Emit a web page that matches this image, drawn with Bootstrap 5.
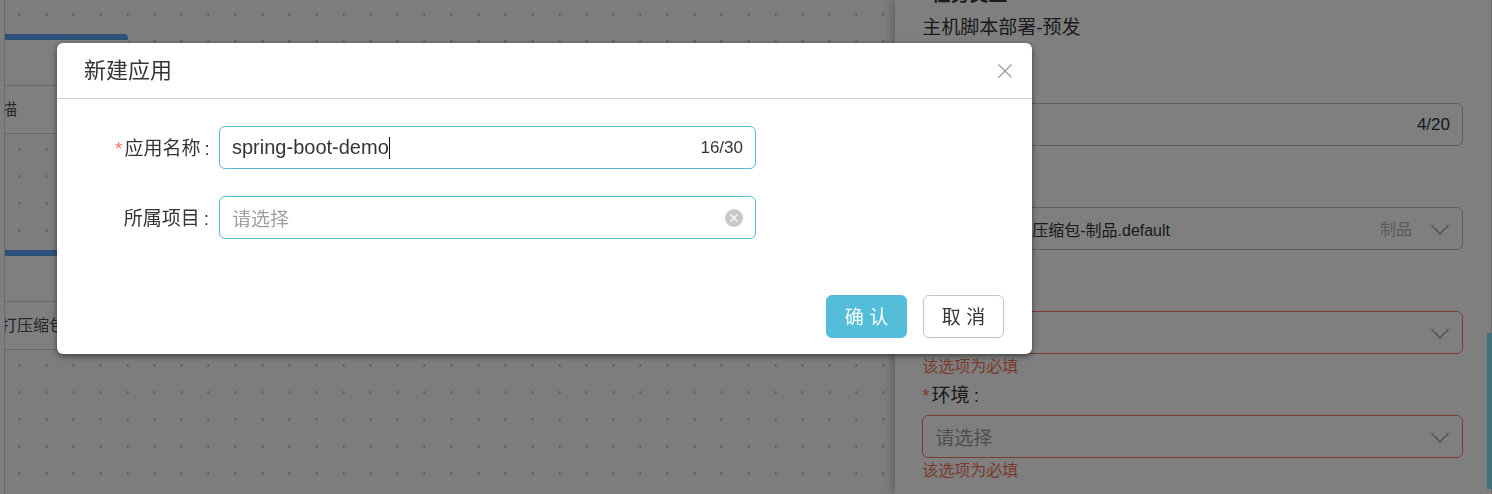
<!DOCTYPE html>
<html lang="zh-CN">
<head>
<meta charset="utf-8">
<meta name="viewport" content="width=device-width, initial-scale=1">
<title>新建应用</title>
<link href="https://cdn.jsdelivr.net/npm/bootstrap@5.3.0/dist/css/bootstrap.min.css" rel="stylesheet">
<style>
  :root {
    --accent: #54bdda;
    --danger: #f5775b;
    --ink: #33353a;
    --muted: #9c9ea1;
  }
  body {
    font-family: "Liberation Sans", "Noto Sans CJK SC", sans-serif;
    font-size: 19px;
    line-height: 28px;
    color: var(--ink);
    background: #fff;
  }
  .workspace { min-height: 100vh; max-height: 100vh; }

  /* Pipeline canvas */
  .canvas {
    margin-left: 4px;
    border-left: 1px solid #d4d6d8;
    background: #f8fafd radial-gradient(circle, #cdcfd2 1px, transparent 2px) 1px 1px / 27px 27px;
  }
  .stages { width: 123px; padding-top: 34px; gap: 116px; }
  .stage { height: 100px; background: #fff; border-top: 6px solid #5aa5f2; border-top-right-radius: 4px; border-bottom: 1px solid #d2d4d6; }
  .stage-name { height: 46px; border-bottom: 1px solid #d6d7d9; }
  .stage-job { height: 47px; margin-left: -4px; padding-top: 1px; font-size: 16px; color: #4a4c50; white-space: nowrap; }

  /* Task drawer */
  .drawer {
    width: 40%;
    padding: 0 28px 0 27px;
    background: #fff;
    border-right: 1px solid #d5d5d5;
    box-shadow: 0 0 12px rgba(0, 0, 0, .35);
  }
  .drawer-kind { margin-top: -15px; line-height: 20px; font-weight: 700; }
  .drawer-value { margin-top: 9px; margin-bottom: 31px; }
  .field { height: 104px; }
  .field-label { height: 20px; line-height: 22px; margin-bottom: 10px; }
  .field-error { font-size: 16px; line-height: 24px; color: var(--danger); }
  .rail { right: 0; top: 333px; bottom: 5px; width: 5px; background: #84dff8; }

  /* Bordered control shared by the drawer and the dialog */
  .control {
    height: 43px;
    margin-bottom: 1px;
    padding: 0 12px;
    border: 1px solid #bcbcbc;
    border-radius: 6px;
    background: #fff;
  }
  .control.is-bad { border-color: var(--danger); }
  .control.is-active { border-color: var(--accent); }
  .control input, .control select {
    min-width: 0;
    height: 30px;
    padding: 0;
    border: 0;
    outline: 0;
    appearance: none;
    background: transparent;
    color: var(--ink);
  }
  .control input { font-size: 20px; }
  .control select { padding-top: 3px; }
  .control select.is-empty { color: var(--muted); }
  .control select.artifact { font-size: 16px; padding-left: 97px; }
  .counter { font-size: 17px; }
  .kind-tag { font-size: 16px; color: #b4b6b8; margin-right: 18px; padding-top: 2px; }
  .star { color: var(--danger); margin-right: 2px; }
  .colon { margin-left: 4px; }

  /* Dialog */
  .app-dialog { max-width: none; margin: 43px 460px 0 57px; }
  .app-dialog .modal-content { border: 0; border-radius: 6px; color: var(--ink); box-shadow: 0 2px 6px rgba(0, 0, 0, .5); }
  .app-dialog .modal-header { height: 56px; padding: 0 20px 0 27px; border-bottom: 1px solid #d2d2d2; border-radius: 0; }
  .app-dialog .modal-title { font-size: 22px; font-weight: 400; line-height: 28px; }
  .app-dialog .modal-body { padding: 27px 27px 0 58px; }
  .app-dialog .modal-footer { padding: 0 28px 16px; margin-top: 55px; gap: 16px; border: 0; }
  .form-line { gap: 10px; }
  .form-line label { width: 94px; padding-top: 2px; white-space: nowrap; }
  .form-line .control { width: 537px; }
  .lines { gap: 26px; }
  .caret { left: 169px; top: 10px; width: 1px; height: 22px; background: #111; }
  .icon-btn { padding: 0; border: 0; background: none; line-height: 1; display: flex; }
  .act { width: 81px; height: 43px; padding: 3px 0 0; font-size: 19px; border-radius: 6px; }
  .act-ok, .act-ok:hover { background: var(--accent); border-color: var(--accent); color: #fff; }
  .act-cancel, .act-cancel:hover { background: #fff; border-color: #c4c4c4; color: var(--ink); }
</style>
</head>
<body>
<div class="workspace d-flex overflow-hidden position-relative">
  <main class="canvas flex-grow-1 overflow-hidden">
    <div class="stages d-flex flex-column">
      <section class="stage">
        <div class="stage-name"></div>
        <div class="stage-job d-flex align-items-center">描</div>
      </section>
      <section class="stage">
        <div class="stage-name"></div>
        <div class="stage-job d-flex align-items-center">打压缩包</div>
      </section>
    </div>
  </main>

  <aside class="drawer flex-shrink-0">
    <div class="drawer-kind"><span class="star">*</span>任务类型</div>
    <div class="drawer-value">主机脚本部署-预发</div>

    <div class="field">
      <div class="field-label"></div>
      <div class="control d-flex align-items-center">
        <input class="flex-grow-1" type="text" aria-label="任务名称">
        <span class="counter">4/20</span>
      </div>
    </div>
    <div class="field">
      <div class="field-label"></div>
      <div class="control d-flex align-items-center">
        <select class="artifact flex-grow-1" aria-label="部署制品"><option>压缩包-制品.default</option></select>
        <span class="kind-tag">制品</span>
        <svg width="20" height="12" viewBox="0 0 20 12" fill="none" stroke="#a6a6a6" stroke-width="1.5" aria-hidden="true"><path d="M1.5 2 10 11 18.500 2"/></svg>
      </div>
    </div>
    <div class="field">
      <div class="field-label"></div>
      <div class="control is-bad d-flex align-items-center">
        <select class="flex-grow-1" aria-label="应用"><option></option></select>
        <svg width="20" height="12" viewBox="0 0 20 12" fill="none" stroke="#a6a6a6" stroke-width="1.5" aria-hidden="true"><path d="M1.5 2 10 11 18.500 2"/></svg>
      </div>
      <div class="field-error">该选项为必填</div>
    </div>
    <div class="field">
      <label class="field-label d-block" for="env"><span class="star">*</span>环境<span class="colon">:</span></label>
      <div class="control is-bad d-flex align-items-center">
        <select id="env" class="is-empty flex-grow-1"><option>请选择</option></select>
        <svg width="20" height="12" viewBox="0 0 20 12" fill="none" stroke="#a6a6a6" stroke-width="1.5" aria-hidden="true"><path d="M1.5 2 10 11 18.500 2"/></svg>
      </div>
      <div class="field-error">该选项为必填</div>
    </div>
  </aside>
  <div class="rail position-absolute"></div>
</div>

<div class="modal-backdrop show"></div>
<div class="modal d-block" role="dialog" aria-modal="true" aria-labelledby="dialogTitle">
  <div class="modal-dialog app-dialog">
    <form class="modal-content">
      <div class="modal-header">
        <h1 class="modal-title" id="dialogTitle">新建应用</h1>
        <button type="button" class="icon-btn" aria-label="关闭">
          <svg width="14" height="14" viewBox="0 0 14 14" stroke="#999" stroke-width="1.2"><path d="M.5.5l13 13M13.500.5l-13 13"/></svg>
        </button>
      </div>
      <div class="modal-body">
        <div class="lines d-flex flex-column">
          <div class="form-line d-flex align-items-center">
            <label class="text-end" for="appName"><span class="star">*</span>应用名称<span class="colon">:</span></label>
            <div class="control is-active d-flex align-items-center position-relative">
              <input id="appName" class="flex-grow-1" type="text" value="spring-boot-demo">
              <span class="counter">16/30</span>
              <span class="caret position-absolute"></span>
            </div>
          </div>
          <div class="form-line d-flex align-items-center">
            <label class="text-end" for="project">所属项目<span class="colon">:</span></label>
            <div class="control is-active d-flex align-items-center">
              <select id="project" class="is-empty flex-grow-1"><option>请选择</option></select>
              <button type="button" class="icon-btn" aria-label="清除">
                <svg width="18" height="18" viewBox="0 0 18 18"><circle cx="9" cy="9" r="9" fill="#c8c8c8"/><path d="M5.500 5.500l7 7M12.500 5.500l-7 7" stroke="#fff" stroke-width="1.200"/></svg>
              </button>
            </div>
          </div>
        </div>
      </div>
      <div class="modal-footer">
        <button type="submit" class="btn act act-ok m-0">确 认</button>
        <button type="button" class="btn act act-cancel m-0">取 消</button>
      </div>
    </form>
  </div>
</div>
<script src="https://cdn.jsdelivr.net/npm/bootstrap@5.3.0/dist/js/bootstrap.bundle.min.js"></script>
</body>
</html>
